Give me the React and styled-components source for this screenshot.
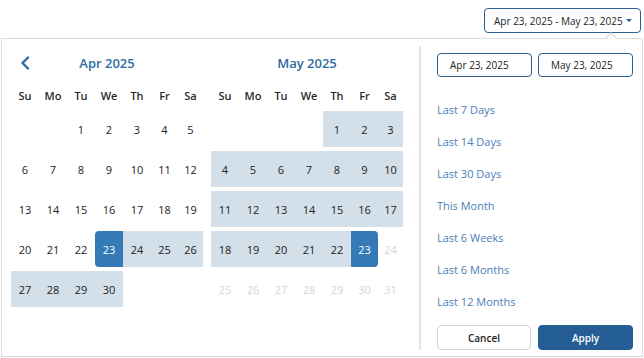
import React from "react";
import styled, { createGlobalStyle, css } from "styled-components";

const Global = createGlobalStyle`
  html, body { margin: 0; padding: 0; background: #fff; }
  body { font-family: "Open Sans", "Noto Sans", sans-serif; color: #222; }
  * { box-sizing: border-box; }
`;

const Page = styled.div`
  width: 644px;
  height: 358px;
  overflow: hidden;
  display: flex;
  flex-direction: column;
`;

const TopBar = styled.div`
  display: flex;
  justify-content: flex-end;
  padding: 8px 3px 0 0;
`;

const Trigger = styled.button`
  height: 25px;
  width: 157px;
  display: flex;
  align-items: center;
  justify-content: space-between;
  padding: 0 8px 0 9px;
  border: 1px solid #2d5f8f;
  border-radius: 4px;
  background: #fff;
  font-family: inherit;
  font-size: 10px;
  color: #222;
  white-space: nowrap;
`;

const Caret = styled.span`
  flex: none;
  width: 0;
  height: 0;
  border-left: 3px solid transparent;
  border-right: 3px solid transparent;
  border-top: 3px solid #2d5f8f;
`;

const Popover = styled.div`
  position: relative;
  margin: 5px 1px 0 1px;
  height: 319px;
  border: 1px solid #dcdcdc;
  background: #fff;
  display: flex;
  &::before {
    content: "";
    position: absolute;
    top: -7px;
    right: 25px;
    border-left: 6px solid transparent;
    border-right: 6px solid transparent;
    border-bottom: 6px solid #dcdcdc;
  }
  &::after {
    content: "";
    position: absolute;
    top: -5px;
    right: 26px;
    border-left: 5px solid transparent;
    border-right: 5px solid transparent;
    border-bottom: 5px solid #fff;
  }
`;

const Calendars = styled.div`
  display: flex;
  gap: 8px;
  padding: 9px 0 0 9px;
  width: 417px;
`;

const Divider = styled.div`
  width: 2px;
  background: #e2e2e2;
  margin: 7px 0 6px 0;
`;

const Month = styled.div`
  width: 192px;
  display: flex;
  flex-direction: column;
`;

const MonthHead = styled.div`
  height: 30px;
  display: grid;
  grid-template-columns: 28px 1fr 28px;
  align-items: center;
`;

const NavBtn = styled.span`
  display: flex;
  align-items: center;
  justify-content: center;
  color: #2e6ca4;
`;

const MonthTitle = styled.div`
  text-align: center;
  font-size: 13px;
  font-weight: 600;
  color: #2e6ca4;
`;

const cols = "repeat(5, 28px) 27px 25px";

const WeekRow = styled.div`
  margin-top: 6px;
  height: 22px;
  display: grid;
  grid-template-columns: ${cols};
  align-items: center;
`;

const WeekDay = styled.div`
  text-align: center;
  font-size: 11px;
  font-weight: 600;
  color: #2a2a2a;
`;

const Days = styled.div`
  margin-top: 5px;
  display: grid;
  grid-template-columns: ${cols};
  grid-auto-rows: 36px;
  row-gap: 4px;
`;

const Day = styled.div`
  display: flex;
  align-items: center;
  justify-content: center;
  font-size: 11px;
  color: #222;
  ${(p) => p.$inRange && css`background: #d3dfe9;`}
  ${(p) => p.$disabled && css`color: #d4d4d4;`}
  ${(p) =>
    p.$selected &&
    css`
      background: #337ab7;
      color: #fff;
    `}
  ${(p) => p.$start && css`border-radius: 4px 0 0 4px;`}
  ${(p) => p.$end && css`border-radius: 0 4px 4px 0;`}
`;

const Side = styled.div`
  flex: 1;
  padding: 14px 9px 0 16px;
  display: flex;
  flex-direction: column;
`;

const Inputs = styled.div`
  display: grid;
  grid-template-columns: 95px 95px;
  gap: 6px;
`;

const DateInput = styled.div`
  height: 24px;
  border: 1px solid #2d5f8f;
  border-radius: 4px;
  display: flex;
  align-items: center;
  padding-left: 12px;
  font-size: 10px;
  color: #222;
`;

const Ranges = styled.ul`
  list-style: none;
  margin: 16px 0 0 0;
  padding: 0;
`;

const RangeItem = styled.li`
  height: 32px;
  display: flex;
  align-items: center;
  font-size: 11px;
  color: #4a80b8;
`;

const Actions = styled.div`
  margin-top: 8px;
  display: grid;
  grid-template-columns: 94px 95px;
  gap: 7px;
`;

const Btn = styled.button`
  height: 25px;
  border-radius: 4px;
  font-family: inherit;
  font-size: 10px;
  font-weight: 600;
  ${(p) =>
    p.$primary
      ? css`
          background: #245e94;
          border: 1px solid #245e94;
          color: #fff;
        `
      : css`
          background: #fff;
          border: 1px solid #d6d6d6;
          color: #222;
        `}
`;

const WEEK = ["Su", "Mo", "Tu", "We", "Th", "Fr", "Sa"];

function MonthView({ title, offset, count, showPrev, dayProps }) {
  const cells = [];
  for (let i = 0; i < offset; i++) cells.push(<div key={"e" + i} />);
  for (let d = 1; d <= count; d++) {
    cells.push(
      <Day key={d} {...dayProps(d)}>
        {d}
      </Day>
    );
  }
  return (
    <Month>
      <MonthHead>
        <NavBtn>
          {showPrev && (
            <svg width="10" height="14" viewBox="0 0 10 14">
              <path d="M8 1.5 L2.5 7 L8 12.5" fill="none" stroke="currentColor" strokeWidth="2.4" strokeLinecap="round" strokeLinejoin="round" />
            </svg>
          )}
        </NavBtn>
        <MonthTitle>{title}</MonthTitle>
        <span />
      </MonthHead>
      <WeekRow>
        {WEEK.map((w) => (
          <WeekDay key={w}>{w}</WeekDay>
        ))}
      </WeekRow>
      <Days>{cells}</Days>
    </Month>
  );
}

const aprProps = (d) => ({
  $selected: d === 23,
  $start: d === 23,
  $inRange: d > 23,
});

const mayProps = (d) => ({
  $selected: d === 23,
  $end: d === 23,
  $inRange: d < 23,
  $disabled: d > 23,
});

const RANGES = [
  "Last 7 Days",
  "Last 14 Days",
  "Last 30 Days",
  "This Month",
  "Last 6 Weeks",
  "Last 6 Months",
  "Last 12 Months",
];

export default function App() {
  return (
    <Page>
      <Global />
      <TopBar>
        <Trigger>
          <span>Apr 23, 2025 - May 23, 2025</span>
          <Caret />
        </Trigger>
      </TopBar>
      <Popover>
        <Calendars>
          <MonthView title="Apr 2025" offset={2} count={30} showPrev dayProps={aprProps} />
          <MonthView title="May 2025" offset={4} count={31} dayProps={mayProps} />
        </Calendars>
        <Divider />
        <Side>
          <Inputs>
            <DateInput>Apr 23, 2025</DateInput>
            <DateInput>May 23, 2025</DateInput>
          </Inputs>
          <Ranges>
            {RANGES.map((r) => (
              <RangeItem key={r}>{r}</RangeItem>
            ))}
          </Ranges>
          <Actions>
            <Btn>Cancel</Btn>
            <Btn $primary>Apply</Btn>
          </Actions>
        </Side>
      </Popover>
    </Page>
  );
}
